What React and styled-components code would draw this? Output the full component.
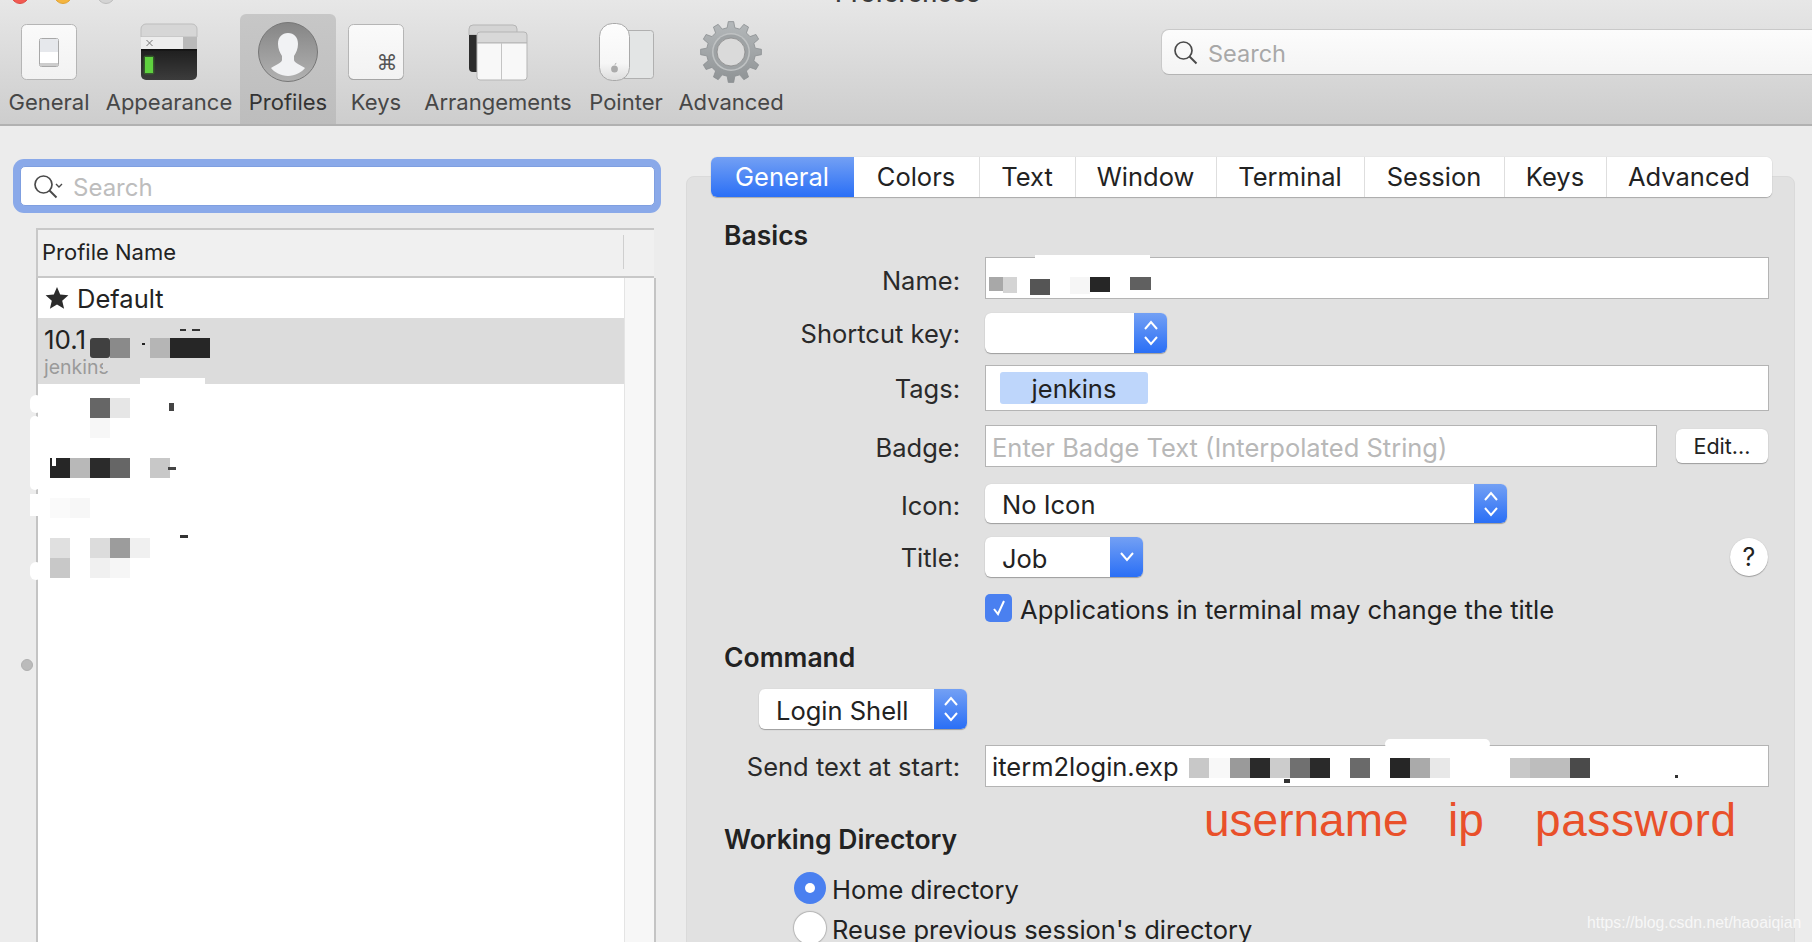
import React from "react";
import styled, { createGlobalStyle } from "styled-components";

const FONT = `Inter, "Noto Sans", "Liberation Sans", sans-serif`;

const Global = createGlobalStyle`
  html, body { margin: 0; padding: 0; background: #ececec; overflow: hidden; }
  * { box-sizing: border-box; }
`;

const Page = styled.div`
  position: relative;
  width: 1812px;
  height: 942px;
  overflow: hidden;
  background: #ececec;
  font-family: ${FONT};
  color: #222;
`;

/* ---------- toolbar ---------- */
const Toolbar = styled.header`
  height: 126px;
  background: linear-gradient(#e7e7e7, #cdcdcd);
  border-bottom: 2px solid #b1b1b1;
`;
const TitleBar = styled.div`
  position: relative;
  height: 14px;
  display: flex;
  gap: 25px;
  padding-left: 11px;
`;
const Light = styled.span`
  width: 18px;
  height: 18px;
  margin-top: -14px;
  border-radius: 50%;
  background: ${(p) => p.$c};
  border: 1px solid ${(p) => p.$b};
`;
const WinTitle = styled.span`
  position: absolute;
  left: 835px;
  top: -20px;
  font-size: 25px;
  line-height: 26px;
  font-weight: 500;
  color: #3c3c3c;
`;
const ToolRow = styled.div`
  display: flex;
  height: 110px;
`;
const ToolItem = styled.div`
  width: ${(p) => p.$w}px;
  flex: none;
  display: flex;
  flex-direction: column;
  align-items: center;
  padding-top: 6px;
  border-radius: 6px 6px 0 0;
  background: ${(p) => (p.$on ? "linear-gradient(#c7c7c7, #bdbdbd)" : "none")};
`;
const ToolLabel = styled.span`
  margin-top: 3px;
  font-size: 22px;
  line-height: 30px;
  white-space: nowrap;
  color: ${(p) => (p.$on ? "#333" : "#474747")};
`;
const TopSearch = styled.div`
  flex: none;
  width: 680px;
  height: 46px;
  margin: 15px 0 0 371px;
  display: flex;
  align-items: center;
  gap: 9px;
  padding: 2px 0 0 11px;
  background: linear-gradient(#fcfcfc, #f4f4f4);
  border: 1px solid #c9c9c9;
  border-bottom-color: #b4b4b4;
  border-radius: 8px;
  font-size: 23.5px;
  color: #a8a8a8;
`;

/* ---------- main ---------- */
const Main = styled.main`
  display: flex;
  height: 816px;
`;
const LeftColumn = styled.section`
  position: relative;
  flex: none;
  width: 686px;
  padding: 33px 0 0 13px;
`;
const SearchHalo = styled.div`
  width: 648px;
  height: 54px;
  padding: 7px 6px 7px 7px;
  background: #8aa9e9;
  border-radius: 11px;
`;
const SearchField = styled.div`
  height: 40px;
  display: flex;
  align-items: center;
  gap: 10px;
  padding: 2px 0 0 12px;
  background: #fff;
  border-radius: 5px;
  border: 1px solid #7f9fe0;
  font-size: 24px;
  color: #bdbdbd;
`;
const ProfileTable = styled.div`
  display: flex;
  flex-direction: column;
  width: 620px;
  height: 720px;
  margin: 15px 0 0 23px;
`;
const TableHead = styled.div`
  flex: none;
  height: 50px;
  display: flex;
  align-items: center;
  padding: 0 0 2px 4px;
  width: 618px;
  background: #f0f0f0;
  border: 2px solid #c8c8c8;
  border-width: 2px 0 2px 2px;
  font-size: 22px;
`;
const HeadTitle = styled.span`
  width: 581px;
`;
const HeadRule = styled.span`
  flex: none;
  width: 1px;
  height: 34px;
  margin-right: 29px;
  background: #cfcfcf;
`;
const TableBody = styled.div`
  flex: 1;
  display: flex;
  background: #fff;
  border: 2px solid #c4c4c4;
  border-width: 0 2px 0 2px;
`;
const Rows = styled.div`
  width: 586px;
  flex: none;
`;
const Gutter = styled.div`
  flex: 1;
  background: #f7f7f7;
  border-left: 1px solid #e4e4e4;
`;
const DefaultRow = styled.div`
  height: 40px;
  display: flex;
  align-items: center;
  gap: 8px;
  padding-left: 7px;
  font-size: 25.5px;
`;
const SelectedRow = styled.div`
  height: 66px;
  padding: 5px 0 0 6px;
  background: #dcdcdc;
`;
const RowTitle = styled.div`
  font-size: 26px;
  line-height: 34px;
`;
const RowSub = styled.div`
  font-size: 19.5px;
  line-height: 20px;
  color: #9a9a9a;
`;
const SplitDot = styled.span`
  position: absolute;
  left: 21px;
  top: 533px;
  width: 12px;
  height: 12px;
  border-radius: 50%;
  background: #bbb;
  border: 1px solid #b0b0b0;
`;

/* mosaic retouching lying over the content */
const Patch = styled.span`
  position: absolute;
  left: ${(p) => p.$x}px;
  top: ${(p) => p.$y}px;
  width: ${(p) => p.$w}px;
  height: ${(p) => p.$h}px;
  background: ${(p) => p.$c};
  border-radius: ${(p) => p.$r || 0}px;
  z-index: 4;
`;

/* ---------- right panel ---------- */
const RightPanel = styled.section`
  position: relative;
  flex: none;
  width: 1109px;
  height: 770px;
  margin-top: 50px;
  padding: 0 25px 0 38px;
  background: #e1e1e1;
  border: 1px solid #dadada;
  border-radius: 8px 8px 0 0;
`;
const Tabs = styled.nav`
  display: flex;
  width: 1061px;
  height: 40px;
  margin: -20px 0 0 -14px;
  background: #fff;
  border-radius: 6px;
  box-shadow: 0 1px 1px #a9a9a9, 0 0 1px #c0c0c0;
  overflow: hidden;
`;
const Tab = styled.div`
  width: ${(p) => p.$w}px;
  flex: none;
  display: flex;
  align-items: center;
  justify-content: center;
  font-size: 25.5px;
  padding: 0 1px 2px 0;
  border-left: ${(p) => (p.$first || p.$on ? "none" : "1px solid #dedede")};
  color: ${(p) => (p.$on ? "#fff" : "#222")};
  background: ${(p) => (p.$on ? "linear-gradient(#73a0f4, #2a6ff6)" : "#fff")};
`;
const Heading = styled.h3`
  margin: ${(p) => p.$top}px 0 0 -1px;
  height: 30px;
  font-size: 26.5px;
  line-height: 30px;
  font-weight: 600;
  color: #222;
`;
const Row = styled.div`
  display: flex;
  align-items: center;
  height: ${(p) => p.$h}px;
  margin-top: ${(p) => p.$top}px;
`;
const Label = styled.label`
  flex: none;
  width: 235px;
  margin-right: 25px;
  padding-top: ${(p) => p.$drop || 0}px;
  text-align: right;
  font-size: 25.5px;
  color: #2a2a2a;
`;
const Field = styled.div`
  flex: ${(p) => (p.$w ? "none" : 1)};
  width: ${(p) => (p.$w ? `${p.$w}px` : "auto")};
  height: 100%;
  display: flex;
  align-items: center;
  padding: ${(p) => p.$drop || 0}px 0 0 6px;
  background: #fff;
  border: 1px solid #b4b4b4;
  font-size: 25.5px;
  white-space: nowrap;
`;
const Placeholder = styled.span`
  color: #b8b8b8;
`;
const Chip = styled.span`
  width: 148px;
  height: 32px;
  margin-left: 8px;
  display: flex;
  align-items: center;
  justify-content: center;
  background: #bed6fb;
  border-radius: 3px;
`;
const Popup = styled.div`
  flex: none;
  width: ${(p) => p.$w}px;
  height: 100%;
  margin-left: ${(p) => p.$left || 0}px;
  display: flex;
  background: #fff;
  border-radius: 6px;
  box-shadow: 0 1px 1px #9d9d9d, 0 0 1px #bbb;
  overflow: hidden;
  font-size: 25.5px;
`;
const PopupText = styled.span`
  flex: 1;
  display: flex;
  align-items: center;
  padding: 2px 0 0 17px;
`;
const Stepper = styled.span`
  flex: none;
  width: 33px;
  display: flex;
  align-items: center;
  justify-content: center;
  background: linear-gradient(#73a0f4, #2a6ff6);
`;
const EditButton = styled.button`
  flex: none;
  width: 92px;
  height: 34px;
  margin-left: 19px;
  padding: 0;
  background: #fff;
  border: none;
  border-radius: 6px;
  box-shadow: 0 1px 1px #9d9d9d, 0 0 1px #bbb;
  font: 21.5px ${FONT};
  color: #222;
`;
const HelpButton = styled.span`
  flex: none;
  width: 38px;
  height: 38px;
  margin: 0 1px 0 auto;
  display: flex;
  align-items: center;
  justify-content: center;
  background: #fff;
  border-radius: 50%;
  box-shadow: 0 1px 1px #9d9d9d, 0 0 1px #bbb;
  font-size: 25px;
`;
const CheckRow = styled.div`
  display: flex;
  align-items: center;
  gap: 8px;
  height: 28px;
  margin: 17px 0 0 260px;
  font-size: 25.6px;
  white-space: nowrap;
`;
const CheckBox = styled.span`
  flex: none;
  width: 27px;
  height: 28px;
  display: flex;
  align-items: center;
  justify-content: center;
  background: #4a80f0;
  border-radius: 5px;
`;
const CheckText = styled.span`
  padding-top: 3px;
`;
const RadioRow = styled.div`
  display: flex;
  align-items: center;
  gap: 6px;
  height: 32px;
  margin: ${(p) => p.$top}px 0 0 69px;
  font-size: 25.5px;
  white-space: nowrap;
`;
const RadioText = styled.span`
  padding-top: 2px;
`;
const Radio = styled.span`
  flex: none;
  width: 32px;
  height: 32px;
  display: flex;
  align-items: center;
  justify-content: center;
  border-radius: 50%;
  background: ${(p) => (p.$on ? "#4a80f0" : "#fff")};
  box-shadow: ${(p) => (p.$on ? "none" : "0 0 1px 1px #b4b4b4")};
  &::after {
    content: "";
    display: ${(p) => (p.$on ? "block" : "none")};
    width: 10px;
    height: 10px;
    border-radius: 50%;
    background: #fff;
  }
`;
const Note = styled.span`
  position: absolute;
  left: ${(p) => p.$x}px;
  top: 613px;
  font-size: 46px;
  line-height: 60px;
  letter-spacing: ${(p) => p.$track || 0}px;
  color: #e9502a;
  white-space: nowrap;
  font-family: "Liberation Sans", sans-serif;
`;
const Watermark = styled.span`
  position: absolute;
  left: 1587px;
  top: 912px;
  font-size: 15.8px;
  line-height: 22px;
  color: #fff;
  opacity: 0.75;
  font-family: "Liberation Sans", sans-serif;
  white-space: nowrap;
`;

/* ---------- drawings ---------- */
const Defs = () => (
  <svg width="0" height="0" style={{ position: "absolute" }}>
    <defs>
      <linearGradient id="paper" x1="0" y1="0" x2="0" y2="1">
        <stop offset="0" stopColor="#fafafa" />
        <stop offset="1" stopColor="#f2f2f2" />
      </linearGradient>
      <linearGradient id="disc" x1="0" y1="0" x2="0" y2="1">
        <stop offset="0" stopColor="#858585" />
        <stop offset="1" stopColor="#b2b2b2" />
      </linearGradient>
      <linearGradient id="term" x1="0" y1="0" x2="0" y2="1">
        <stop offset="0" stopColor="#1f1f1f" />
        <stop offset="1" stopColor="#3c3c3c" />
      </linearGradient>
      <linearGradient id="steel" x1="0" y1="0" x2="0" y2="1">
        <stop offset="0" stopColor="#b4b8ba" />
        <stop offset="1" stopColor="#8f9395" />
      </linearGradient>
      <linearGradient id="mouse" x1="0" y1="0" x2="0" y2="1">
        <stop offset="0" stopColor="#fdfdfd" />
        <stop offset="0.7" stopColor="#f6f6f6" />
        <stop offset="1" stopColor="#dddddd" />
      </linearGradient>
    </defs>
  </svg>
);

const Ic = ({ children }) => (
  <svg width="64" height="64" viewBox="0 0 64 64">{children}</svg>
);

const GeneralIcon = () => (
  <Ic>
    <rect x="4.5" y="4.5" width="55" height="55" rx="5" fill="url(#paper)" stroke="#b5b5b5" />
    <rect x="22.5" y="18.5" width="19" height="28" rx="2" fill="#fff" stroke="#a8a8a8" />
    <rect x="23" y="19" width="18" height="13" fill="#e6e8ec" />
    <rect x="23" y="43" width="18" height="3" fill="#cdcdcd" />
  </Ic>
);
const AppearanceIcon = () => (
  <Ic>
    <path d="M4 9a5 5 0 0 1 5-5h46a5 5 0 0 1 5 5v8H4z" fill="#d6d6d6" stroke="#bdbdbd" />
    <rect x="4" y="17" width="42" height="13" fill="#ededed" />
    <rect x="46" y="17" width="14" height="13" fill="#b9b9b9" />
    <path d="M4 30h56v25a5 5 0 0 1-5 5H9a5 5 0 0 1-5-5z" fill="url(#term)" />
    <rect x="4" y="29" width="56" height="1.5" fill="#111" />
    <path d="M9.5 20l6 6M15.5 20l-6 6" stroke="#777" strokeWidth="1" />
    <rect x="6.5" y="35.5" width="11" height="19" rx="2" fill="#3c7a2c" opacity="0.55" />
    <rect x="8" y="37" width="8" height="16" fill="#5fd13f" />
  </Ic>
);
const ProfileIcon = () => (
  <Ic>
    <clipPath id="discClip"><circle cx="32" cy="32" r="29" /></clipPath>
    <circle cx="32" cy="32" r="29.5" fill="url(#disc)" stroke="#777" />
    <path
      clipPath="url(#discClip)"
      d="M32 13c-6 0-10 4-10 11 0 5 2 9 4 12v4c0 3-7 5-11 8 3 4 10 8 17 8s14-4 17-8c-4-3-11-5-11-8v-4c2-3 4-7 4-12 0-7-4-11-10-11z"
      fill="#f1f2f4"
    />
  </Ic>
);
const KeysIcon = () => (
  <Ic>
    <rect x="4.5" y="4.5" width="55" height="55" rx="5" fill="url(#paper)" stroke="#b5b5b5" />
    <path d="M5 56.5a4 4 0 0 0 4 3h46a4 4 0 0 0 4-3" fill="none" stroke="#a5a5a5" />
    <text x="43" y="50" fontSize="21" textAnchor="middle" fill="#555" fontFamily="DejaVu Sans">⌘</text>
  </Ic>
);
const ArrangeIcon = () => (
  <Ic>
    <path d="M3 9a4 4 0 0 1 4-4h40a4 4 0 0 1 4 4v6H3z" fill="#d4d4d4" stroke="#b5b5b5" />
    <path d="M3 15h48v33a4 4 0 0 1-4 4H7a4 4 0 0 1-4-4z" fill="#2d2d2d" />
    <path d="M11 15a3 3 0 0 1 3-3h44a3 3 0 0 1 3 3v8H11z" fill="#d8d8d8" stroke="#b5b5b5" />
    <path d="M11 23h50v34a3 3 0 0 1-3 3H14a3 3 0 0 1-3-3z" fill="#f8f8f8" stroke="#b5b5b5" />
    <path d="M35.5 23v37" stroke="#c4c4c4" />
  </Ic>
);
const PointerIcon = () => (
  <Ic>
    <rect x="24.5" y="10.5" width="35" height="48" rx="3" fill="#e3e5e5" stroke="#b0b0b0" />
    <rect x="5.5" y="3.5" width="30" height="57" rx="13" fill="url(#mouse)" stroke="#a9a9a9" />
    <ellipse cx="20.5" cy="49" rx="3.4" ry="3.6" fill="#ababab" />
    <path d="M20.5 45c.2-1.2 1-2 2-2.2-.1 1.2-.9 2-2 2.2z" fill="#ababab" />
  </Ic>
);
const gearPath = (() => {
  const n = 12, R = 30.5, r = 24.5, cx = 32, cy = 32;
  let d = "";
  for (let i = 0; i < n; i++) {
    const a = (i * 2 * Math.PI) / n - Math.PI / 2;
    const s = (2 * Math.PI) / n;
    const pts = [
      [r, a - s * 0.3],
      [R, a - s * 0.17],
      [R, a + s * 0.17],
      [r, a + s * 0.3],
    ];
    pts.forEach(([q, t], j) => {
      d += `${i === 0 && j === 0 ? "M" : "L"}${(cx + q * Math.cos(t)).toFixed(2)} ${(cy + q * Math.sin(t)).toFixed(2)}`;
    });
  }
  return d + "Z";
})();
const GearIcon = () => (
  <Ic>
    <path d={gearPath} fill="url(#steel)" stroke="#8a8e90" strokeWidth="0.8" />
    <circle cx="32" cy="32" r="19" fill="#bfc2c3" />
    <circle cx="32" cy="32" r="17.5" fill="#9ea2a4" />
    <circle cx="32" cy="32" r="14" fill="#dadada" stroke="#888" strokeWidth="0.8" />
  </Ic>
);

const Loupe = ({ caret }) => (
  <svg width={caret ? 30 : 26} height="26" viewBox={caret ? "0 0 30 26" : "0 0 26 26"} style={{ flex: "none" }}>
    <circle cx="10.5" cy="10.5" r="8.5" fill="none" stroke="#4a4a4a" strokeWidth="1.7" />
    <path d="M16.5 16.5l7 7" stroke="#4a4a4a" strokeWidth="1.9" />
    {caret && <path d="M23 10l3 3 3-3" fill="none" stroke="#4a4a4a" strokeWidth="1.4" />}
  </svg>
);
const Updown = () => (
  <svg width="18" height="30" viewBox="0 0 18 30">
    <path d="M3 11l6-7 6 7M3 19l6 7 6-7" fill="none" stroke="#fff" strokeWidth="2" />
  </svg>
);
const Down = () => (
  <svg width="18" height="14" viewBox="0 0 18 14">
    <path d="M3 3l6 7 6-7" fill="none" stroke="#fff" strokeWidth="2" />
  </svg>
);
const Star = () => (
  <svg width="24" height="24" viewBox="0 0 24 24">
    <path d="M12 1l3.2 7.6 8.2.7-6.2 5.4 1.9 8L12 18.4 4.9 22.7l1.9-8L.6 9.3l8.2-.7z" fill="#2b2b2b" />
  </svg>
);
const Tick = () => (
  <svg width="18" height="20" viewBox="0 0 18 20">
    <path d="M4 11l4 5 6-13" fill="none" stroke="#fff" strokeWidth="2" />
  </svg>
);

const TOOLS = [
  ["General", 98, GeneralIcon],
  ["Appearance", 142, AppearanceIcon],
  ["Profiles", 96, ProfileIcon, true],
  ["Keys", 80, KeysIcon],
  ["Arrangements", 164, ArrangeIcon],
  ["Pointer", 92, PointerIcon],
  ["Advanced", 118, GearIcon],
];
const TABS = [
  ["General", 143, true],
  ["Colors", 125],
  ["Text", 96],
  ["Window", 141],
  ["Terminal", 148],
  ["Session", 140],
  ["Keys", 102],
  ["Advanced", 166],
];

/* page coordinates of the retouched areas: x, y, w, h, colour, radius */
const PATCHES = [
  [90, 338, 20, 20, "#404040", 3], [110, 338, 20, 20, "#8a8a8a"], [150, 338, 20, 20, "#b5b5b5"], [170, 338, 40, 20, "#262626"],
  [180, 329, 6, 2, "#333"], [192, 329, 8, 2, "#333"], [142, 343, 3, 2, "#222"],
  [103, 358, 30, 13, "#dcdcdc"], [140, 378, 65, 6, "#fff"],
  [30, 395, 12, 18, "#fff", 8], [30, 416, 10, 74, "#fff", 6], [30, 494, 10, 22, "#fff"],
  [90, 398, 20, 20, "#666"], [110, 398, 20, 20, "#e6e6e6"], [90, 418, 20, 20, "#f7f7f7"],
  [169, 403, 5, 8, "#444"],
  [50, 458, 20, 20, "#262626"], [70, 458, 20, 20, "#b8b8b8"], [90, 458, 20, 20, "#2b2b2b"], [110, 458, 20, 20, "#666"], [150, 458, 20, 20, "#c8c8c8"],
  [52, 458, 4, 8, "#fff"], [168, 467, 8, 3, "#444"],
  [50, 498, 20, 20, "#fafafa"], [70, 498, 20, 20, "#f7f7f7"],
  [50, 538, 20, 20, "#e0e0e0"], [90, 538, 20, 20, "#dcdcdc"], [110, 538, 20, 20, "#9c9c9c"], [130, 538, 20, 20, "#f0f0f0"],
  [50, 558, 20, 20, "#c8c8c8"], [90, 558, 20, 20, "#f0f0f0"], [110, 558, 20, 20, "#f6f6f6"],
  [30, 562, 12, 18, "#fff", 8], [180, 535, 8, 3, "#333"],
  [1035, 255, 115, 5, "#fff"],
  [989, 277, 14, 14, "#a8a8a8"], [1003, 277, 14, 16, "#d4d4d4"], [1030, 279, 20, 16, "#555"],
  [1070, 277, 20, 17, "#f6f6f6"], [1090, 277, 20, 15, "#262626"], [1130, 277, 21, 13, "#606060"],
  [1385, 739, 105, 10, "#fff", 5],
  [1189, 758, 20, 20, "#c8c8c8"], [1209, 758, 21, 20, "#f8f8f8"], [1230, 758, 20, 20, "#9a9a9a"], [1250, 758, 20, 20, "#2a2a2a"],
  [1270, 758, 20, 20, "#ccc"], [1290, 758, 20, 20, "#707070"], [1310, 758, 20, 20, "#2a2a2a"], [1350, 758, 20, 20, "#6a6a6a"],
  [1390, 758, 20, 20, "#262626"], [1410, 758, 20, 20, "#aaa"], [1430, 758, 20, 20, "#e8e8e8"],
  [1510, 758, 20, 20, "#c8c8c8"], [1530, 758, 40, 20, "#bdbdbd"], [1570, 758, 20, 20, "#4a4a4a"],
  [1284, 779, 6, 4, "#333"], [1675, 775, 3, 3, "#333"],
];

export default function App() {
  return (
    <Page>
      <Global />
      <Defs />
      <Toolbar>
        <TitleBar>
          <Light $c="#f25a52" $b="#dd4a42" />
          <Light $c="#f5b53f" $b="#dfa234" />
          <Light $c="#d4d4d4" $b="#bdbdbd" />
          <WinTitle>Preferences</WinTitle>
        </TitleBar>
        <ToolRow>
          {TOOLS.map(([name, w, Icon, on]) => (
            <ToolItem key={name} $w={w} $on={on}>
              <Icon />
              <ToolLabel $on={on}>{name}</ToolLabel>
            </ToolItem>
          ))}
          <TopSearch>
            <Loupe />
            Search
          </TopSearch>
        </ToolRow>
      </Toolbar>

      <Main>
        <LeftColumn>
          <SearchHalo>
            <SearchField>
              <Loupe caret />
              Search
            </SearchField>
          </SearchHalo>
          <ProfileTable>
            <TableHead>
              <HeadTitle>Profile Name</HeadTitle>
              <HeadRule />
            </TableHead>
            <TableBody>
              <Rows>
                <DefaultRow>
                  <Star />
                  Default
                </DefaultRow>
                <SelectedRow>
                  <RowTitle>10.1</RowTitle>
                  <RowSub>jenkins</RowSub>
                </SelectedRow>
              </Rows>
              <Gutter />
            </TableBody>
          </ProfileTable>
          <SplitDot />
        </LeftColumn>

        <RightPanel>
          <Tabs>
            {TABS.map(([t, w, on], i) => (
              <Tab key={t} $w={w} $on={on} $first={i === 0 || i === 1}>{t}</Tab>
            ))}
          </Tabs>
          <Heading $top={23}>Basics</Heading>
          <Row $h={42} $top={7}>
            <Label $drop={4}>Name:</Label>
            <Field />
          </Row>
          <Row $h={40} $top={14}>
            <Label>Shortcut key:</Label>
            <Popup $w={182}>
              <PopupText />
              <Stepper><Updown /></Stepper>
            </Popup>
          </Row>
          <Row $h={46} $top={12}>
            <Label>Tags:</Label>
            <Field><Chip>jenkins</Chip></Field>
          </Row>
          <Row $h={42} $top={14}>
            <Label $drop={3}>Badge:</Label>
            <Field $w={672} $drop={3}><Placeholder>Enter Badge Text (Interpolated String)</Placeholder></Field>
            <EditButton>Edit...</EditButton>
          </Row>
          <Row $h={39} $top={17}>
            <Label $drop={3}>Icon:</Label>
            <Popup $w={522}>
              <PopupText>No Icon</PopupText>
              <Stepper><Updown /></Stepper>
            </Popup>
          </Row>
          <Row $h={40} $top={14}>
            <Label>Title:</Label>
            <Popup $w={158}>
              <PopupText>Job</PopupText>
              <Stepper><Down /></Stepper>
            </Popup>
            <HelpButton>?</HelpButton>
          </Row>
          <CheckRow>
            <CheckBox><Tick /></CheckBox>
            <CheckText>Applications in terminal may change the title</CheckText>
          </CheckRow>
          <Heading $top={20}>Command</Heading>
          <Row $h={40} $top={17}>
            <Popup $w={208} $left={34}>
              <PopupText>Login Shell</PopupText>
              <Stepper><Updown /></Stepper>
            </Popup>
          </Row>
          <Row $h={42} $top={16}>
            <Label>Send text at start:</Label>
            <Field>iterm2login.exp</Field>
          </Row>
          <Heading $top={37}>Working Directory</Heading>
          <RadioRow $top={18}>
            <Radio $on />
            <RadioText>Home directory</RadioText>
          </RadioRow>
          <RadioRow $top={8}>
            <Radio />
            <RadioText>Reuse previous session's directory</RadioText>
          </RadioRow>
          <Note $x={517}>username</Note>
          <Note $x={761}>ip</Note>
          <Note $x={848} $track={0.6}>password</Note>
        </RightPanel>
      </Main>

      {PATCHES.map(([x, y, w, h, c, r], i) => (
        <Patch key={i} $x={x} $y={y} $w={w} $h={h} $c={c} $r={r} />
      ))}
      <Watermark>https://blog.csdn.net/haoaiqian</Watermark>
    </Page>
  );
}
